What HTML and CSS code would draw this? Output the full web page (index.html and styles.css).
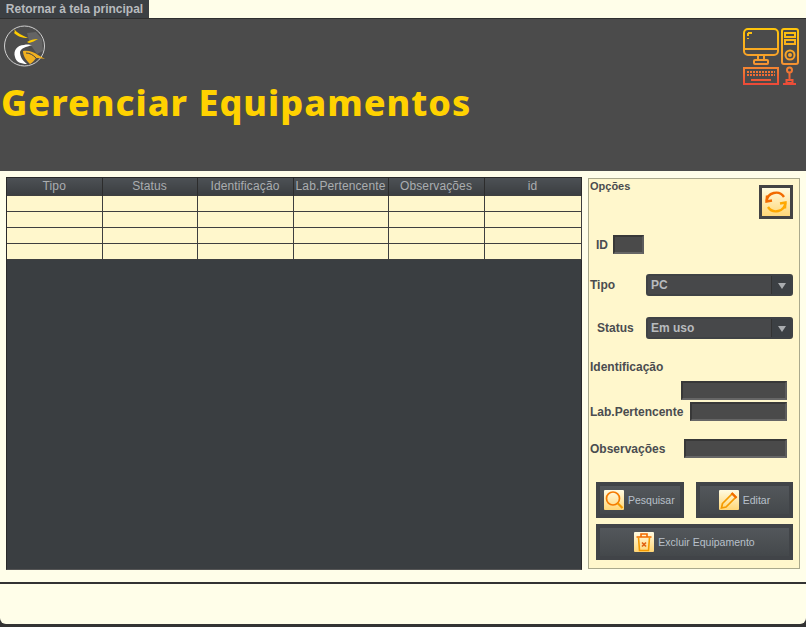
FILE: index.html
```html
<!DOCTYPE html>
<html lang="pt">
<head>
<meta charset="utf-8">
<title>Gerenciar Equipamentos</title>
<link rel="stylesheet" href="styles.css">
</head>
<body>
<div class="topbar"><button class="tab">Retornar à tela principal</button></div>
<header class="header">
  <div class="header-left">
    <svg class="logo" width="44" height="44" viewBox="0 0 44 44">
      <circle cx="21.5" cy="22" r="20" fill="#4c4c4c" stroke="#d0d0d0" stroke-width="1"/>
      <path d="M24 9 L33 8 L39 15 L40 27 L34 30 L27 20Z" fill="#646464"/>
      <path d="M11 5 C14 9 19 11 25 14 C19 14 14 12 11 9 C12 8 12 7 11 5Z" fill="#ffcc00"/>
      <path d="M24 18 C27 16 31 15 35 15 C32 17 29 18 26 19Z" fill="#ffcc00"/>
      <path d="M12 33 C10 27 14 21 21 21 C25 20 27 21 29 21 C23 23 18 24 17 28 C17 33 20 37 24 40 C18 40 13 38 12 33Z" fill="#fff"/>
      <path d="M20 27 C25 26 31 28 35 31 L42 35 C38 34 35 34 33 34 C31 37 29 39 27 40 C23 36 20 32 20 27Z" fill="#f0b020"/>
      <path d="M23 29 C27 29 30 31 33 34" stroke="#444" stroke-width="1" fill="none"/>
    </svg>
    <h1 class="title">Gerenciar Equipamentos</h1>
  </div>
  <svg class="pc-icon" width="58" height="58" viewBox="0 0 58 58" fill="none" stroke="url(#pcg)" stroke-width="2">
    <defs>
      <linearGradient id="pcg" gradientUnits="userSpaceOnUse" x1="0" y1="0" x2="0" y2="56">
        <stop offset="0" stop-color="#ffc60a"/>
        <stop offset=".6" stop-color="#f59a30"/>
        <stop offset="1" stop-color="#ec4a38"/>
      </linearGradient>
    </defs>
    <rect x="1" y="1" width="34" height="26" rx="4"/>
    <path d="M1 21 H35"/>
    <path d="M5 5 H9 M5 5 V8 M5 10 V11"/>
    <path d="M15 27 V32 M21 27 V32"/>
    <rect x="11" y="32" width="14" height="4" rx="1"/>
    <rect x="39" y="1" width="16" height="35" rx="2"/>
    <rect x="42" y="5" width="10" height="4"/>
    <rect x="42" y="12" width="10" height="4"/>
    <circle cx="47" cy="27" r="4.5"/>
    <circle cx="47" cy="27" r="1"/>
    <rect x="1" y="40" width="34" height="16"/>
    <path d="M4 44 H32 M4 47 H32" stroke-dasharray="2 1"/>
    <path d="M8 52 H28"/>
    <circle cx="46.500" cy="42" r="2.500"/>
    <path d="M46.500 45 V52"/>
    <path d="M43.500 52 H49.500 V55 H43.500Z M40 56 H53"/>
  </svg>
</header>
<main class="main">
  <section class="table-wrap">
    <table class="grid">
      <thead>
        <tr><th>Tipo</th><th>Status</th><th>Identificação</th><th>Lab.Pertencente</th><th>Observações</th><th>id</th></tr>
      </thead>
      <tbody>
        <tr><td></td><td></td><td></td><td></td><td></td><td></td></tr>
        <tr><td></td><td></td><td></td><td></td><td></td><td></td></tr>
        <tr><td></td><td></td><td></td><td></td><td></td><td></td></tr>
        <tr><td></td><td></td><td></td><td></td><td></td><td></td></tr>
      </tbody>
    </table>
  </section>
  <aside class="panel">
    <div class="panel-head">
      <span class="panel-title">Opções</span>
      <button class="refresh" aria-label="Atualizar">
        <svg width="28" height="28" viewBox="0 0 28 28" fill="none" stroke-width="2.4">
          <path d="M4.600 13.500 A9.500 9.500 0 0 1 22 9" stroke="#f26a00"/>
          <path d="M5 7.500 L4.600 13.500 L10 12.500" stroke="#f26a00"/>
          <path d="M23.400 14.500 A9.500 9.500 0 0 1 6 19" stroke="#ffa800"/>
          <path d="M23 20.500 L23.400 14.500 L18 15.500" stroke="#ffa800"/>
        </svg>
      </button>
    </div>
    <div class="row row-id"><label class="lbl">ID</label><span class="field field-id"></span></div>
    <div class="row row-tipo"><label class="lbl lbl-tipo">Tipo</label><span class="combo"><span class="combo-val">PC</span><span class="combo-btn"></span></span></div>
    <div class="row row-status"><label class="lbl lbl-status">Status</label><span class="combo"><span class="combo-val">Em uso</span><span class="combo-btn"></span></span></div>
    <div class="lbl lbl-ident">Identificação</div>
    <div class="row row-end"><span class="field field-ident"></span></div>
    <div class="row row-end row-lab"><label class="lbl lbl-grow">Lab.Pertencente</label><span class="field field-lab"></span></div>
    <div class="row row-end row-obs"><label class="lbl lbl-grow">Observações</label><span class="field field-obs"></span></div>
    <div class="actions">
      <button class="act act-search">
        <span class="act-inner">
          <span class="tile"><svg width="20" height="20" viewBox="0 0 20 20" fill="none"><circle cx="9" cy="8.500" r="6.500" stroke="#f57a00" stroke-width="1.7"/><path d="M13.500 13 L18.500 18" stroke="#f59a00" stroke-width="2.200"/></svg></span>
          Pesquisar
        </span>
      </button>
      <button class="act act-edit">
        <span class="act-inner">
          <span class="tile"><svg width="20" height="20" viewBox="0 0 20 20" fill="none" stroke-width="1.7"><path d="M3.500 13.500 L13.500 3.500 L17 7 L7 17 L2.500 18Z" stroke="#f59a00"/><path d="M12.500 3 L17.500 8" stroke="#f26a00" stroke-width="2.200"/></svg></span>
          Editar
        </span>
      </button>
      <button class="act act-del">
        <span class="act-inner">
          <span class="tile"><svg width="20" height="20" viewBox="0 0 20 20" fill="none" stroke-width="1.6"><path d="M2.500 5 H17.500 M7 4.500 V2 H13 V4.500" stroke="#f26a00"/><path d="M4.500 5.500 L5.500 18.500 H14.500 L15.500 5.500" stroke="#f59a00"/><path d="M8 10.500 L12 14.500 M12 10.500 L8 14.500" stroke="#e06010"/></svg></span>
          Excluir Equipamento
        </span>
      </button>
    </div>
  </aside>
</main>
<footer class="footer"></footer>
</body>
</html>
```

FILE: styles.css
```css
* { box-sizing: border-box; }
html, body { margin: 0; padding: 0; }
body {
  width: 806px;
  height: 627px;
  overflow: hidden;
  background: #333;
  font-family: "Liberation Sans", Arial, sans-serif;
}
button { font-family: inherit; padding: 0; margin: 0; }

.topbar { height: 18px; background: #fffee9; }
.tab {
  display: block;
  width: 149px;
  height: 18px;
  border: 0;
  background: #3c4044;
  color: #b8bbbe;
  font-size: 12px;
  font-weight: bold;
  text-align: center;
}

.header {
  height: 153px;
  background: #4b4b4b;
  border-top: 1px solid #2f2f2f;
  display: flex;
  justify-content: space-between;
  align-items: flex-start;
}
.header-left { display: flex; flex-direction: column; }
.logo { display: block; margin: 5px 0 0 3px; }
.title {
  margin: 12px 0 0 1px;
  font-family: "Noto Sans", sans-serif;
  font-size: 36px;
  line-height: 46px;
  font-weight: 800;
  letter-spacing: 1px;
  color: #ffd200;
  white-space: nowrap;
}
.pc-icon { display: block; margin: 9px 5px 0 0; }

.main {
  height: 411px;
  display: flex;
  align-items: flex-start;
  padding: 6px 0 0 6px;
  background: #fffee9;
}
.table-wrap {
  width: 576px;
  height: 393px;
  background: #3a3e41;
  border: 1px solid #2a2a2a;
  border-bottom-color: #555;
}
.grid {
  width: 574px;
  table-layout: fixed;
  border-collapse: collapse;
}
.grid th {
  width: 96px;
  height: 17px;
  padding: 0;
  font-size: 12px;
  font-weight: normal;
  letter-spacing: 0.12px;
  color: #aaadb0;
  background: linear-gradient(#4d5155, #3b3e41);
  border-left: 1px solid #2c2c2c;
  border-right: 1px solid #2c2c2c;
}
.grid th:nth-child(1), .grid th:nth-child(2), .grid th:nth-child(4) { width: 95px; }
.grid th:nth-child(6) { width: 97px; }
.grid td {
  height: 16px;
  padding: 0;
  background: #fff7cc;
  border: 1px solid #3f3f3f;
}
.grid th:first-child, .grid td:first-child { border-left: 0; }

.panel {
  width: 212px;
  height: 391px;
  margin: 1px 0 0 6px;
  padding: 0 6px 0 1px;
  background: #fff7cc;
  border: 1px solid #aaa98c;
  color: #4a4c50;
  display: flex;
  flex-direction: column;
}
.panel-head {
  display: flex;
  justify-content: space-between;
  align-items: flex-start;
  height: 41px;
  padding-top: 6px;
}
.panel-title { font-size: 11px; font-weight: bold; line-height: 13px; margin-top: -6px; padding-top: 1px; }
.refresh {
  width: 34px;
  height: 34px;
  border: 3px solid #444;
  background: linear-gradient(#fffbe0, #ffd778);
  display: flex;
  align-items: center;
  justify-content: center;
}
.refresh svg { display: block; }
.row { display: flex; align-items: center; }
.lbl { font-size: 12px; font-weight: bold; line-height: 14px; color: #4a4c50; }
.row-id { height: 19px; margin-top: 15px; padding-left: 6px; }
.field {
  display: block;
  background: #4a4a4a;
  border: 2px solid #383838;
  border-right-color: #5c5c5c;
  border-bottom-color: #666;
  height: 19px;
}
.field-id { width: 31px; margin-left: 5px; }
.row-tipo { height: 22px; margin-top: 20px; }
.row-status { height: 22px; margin-top: 21px; }
.lbl-tipo { width: 56px; }
.lbl-status { width: 49px; margin-left: 7px; }
.combo {
  width: 147px;
  height: 22px;
  display: flex;
  background: #47484a;
  border: 2px solid #3f4245;
  border-radius: 3px;
}
.combo-val {
  flex: 1;
  padding-left: 3px;
  font-size: 12px;
  font-weight: bold;
  line-height: 18px;
  color: #b8bbbe;
  border-right: 1px solid #333;
}
.combo-btn {
  width: 19px;
  background: #3c4044;
  position: relative;
}
.combo-btn::after {
  content: "";
  position: absolute;
  left: 6px;
  top: 7px;
  border-left: 4px solid transparent;
  border-right: 4px solid transparent;
  border-top: 6px solid #a9acaf;
}
.lbl-ident { margin-top: 21px; }
.row-end { justify-content: flex-end; padding-right: 6px; height: 19px; margin-top: 7px; }
.row-lab { margin-top: 2px; }
.row-obs { margin-top: 18px; }
.lbl-grow { flex: 1; }
.field-ident { width: 106px; }
.field-lab { width: 97px; }
.field-obs { width: 103px; }

.actions {
  display: grid;
  grid-template-columns: 88px 97px;
  column-gap: 12px;
  row-gap: 6px;
  margin: 24px 0 0 6px;
}
.act {
  height: 36px;
  padding: 4px;
  border: 0;
  background: #414448;
  color: #b8c0ca;
  font-size: 10.5px;
}
.act-del { grid-column: 1 / 3; }
.act-inner {
  height: 28px;
  display: flex;
  align-items: center;
  justify-content: center;
  gap: 4px;
  background: linear-gradient(#53575b, #44484b);
}
.act-search .act-inner { justify-content: flex-start; padding-left: 4px; }
.tile {
  width: 20px;
  height: 20px;
  background: linear-gradient(#fffbe2, #ffd676);
  border-radius: 1px;
  display: block;
}
.tile svg { display: block; }

.footer {
  height: 42px;
  background: #fffee9;
  border-top: 2px solid #333;
  border-bottom-right-radius: 6px;
  border-bottom-left-radius: 6px;
}
```
